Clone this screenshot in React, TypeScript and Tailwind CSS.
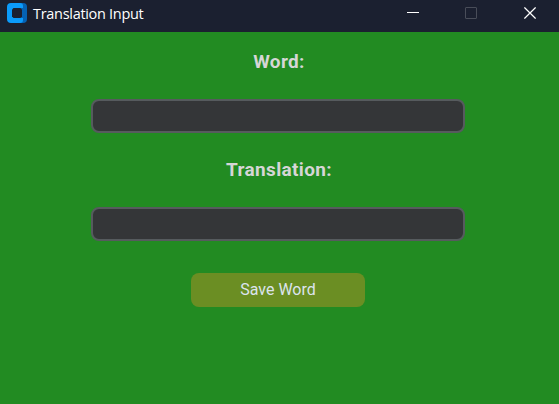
import { useState } from "react";

function AppIcon() {
  return (
    <svg width="21" height="21" viewBox="0 0 21 21" className="ml-[7px] shrink-0" aria-hidden="true">
      <path d="M12 0H16A4 4 0 0 1 20 4V16A4 4 0 0 1 16 20H12Z" fill="#0562b4" />
      <path
        fill="#0b9bfb"
        d="M4 0H13A3 3 0 0 1 16 3V17A3 3 0 0 1 13 20H4A4 4 0 0 1 0 16V4A4 4 0 0 1 4 0Z"
      />
      <path d="M14 5H16V15H14Z" fill="#0562b4" />
      <path d="M6.5 5H13.5L15 6.5V13.5L13.5 15H6.5L5 13.5V6.5Z" fill="#1b2030" />
    </svg>
  );
}

function TitleBar() {
  return (
    <header className="flex h-8 items-start bg-[#1b2030] pt-[3px]">
      <AppIcon />
      <span className="ml-[5px] font-['Open_Sans','Noto_Sans',sans-serif] text-[14.5px] leading-[21px] tracking-[-0.3px] text-white">
        Translation Input
      </span>
      <div className="ml-auto flex text-white">
        <button aria-label="Minimize" className="flex h-[21px] w-[58px] justify-center">
          <svg width="12" height="20" viewBox="0 0 12 20" shapeRendering="crispEdges" className="mr-0.5">
            <rect y="9" width="12" height="1" fill="#fff" />
          </svg>
        </button>
        <button aria-label="Maximize" disabled className="flex h-[21px] w-[58px] justify-center">
          <svg width="12" height="20" viewBox="0 0 12 20" className="mr-0.5">
            <rect x="0.5" y="4.5" width="11" height="11" rx="0.5" fill="none" stroke="#494d59" />
          </svg>
        </button>
        <button aria-label="Close" className="flex h-[21px] w-[58px] justify-center">
          <svg width="12" height="20" viewBox="0 0 12 20">
            <path d="M0.4 4.4L11.6 15.6M11.6 4.4L0.4 15.6" stroke="#fff" strokeWidth="1.3" />
          </svg>
        </button>
      </div>
    </header>
  );
}

type FieldProps = { label: string; value: string; onChange: (value: string) => void };

function Field({ label, value, onChange }: FieldProps) {
  return (
    <label className="flex w-[374px] flex-col">
      <span className="mb-[25px] h-6 pl-[2px] text-center text-[19px] leading-6 font-bold tracking-[0.35px] text-[#d6d6d6]">
        {label}
      </span>
      <input
        value={value}
        onChange={(event) => onChange(event.target.value)}
        className="h-[34px] w-full rounded-[8px] border-2 border-[#565b5e] bg-[#343638] px-2 text-[#dce4ee] outline-none"
      />
    </label>
  );
}

export default function App() {
  const [word, setWord] = useState("");
  const [translation, setTranslation] = useState("");

  return (
    <div className="flex h-[404px] w-[559px] flex-col overflow-hidden bg-[#228b22] font-[Roboto,sans-serif]">
      <TitleBar />
      <main className="flex flex-1 flex-col items-center gap-[25px] pt-[18px] pr-[3px]">
        <Field label="Word:" value={word} onChange={setWord} />
        <Field label="Translation:" value={translation} onChange={setTranslation} />
        <button className="mt-[7px] h-[34px] w-[174px] rounded-[8px] bg-[#6b8e23] text-base text-[#dce4ee]">
          Save Word
        </button>
      </main>
    </div>
  );
}
